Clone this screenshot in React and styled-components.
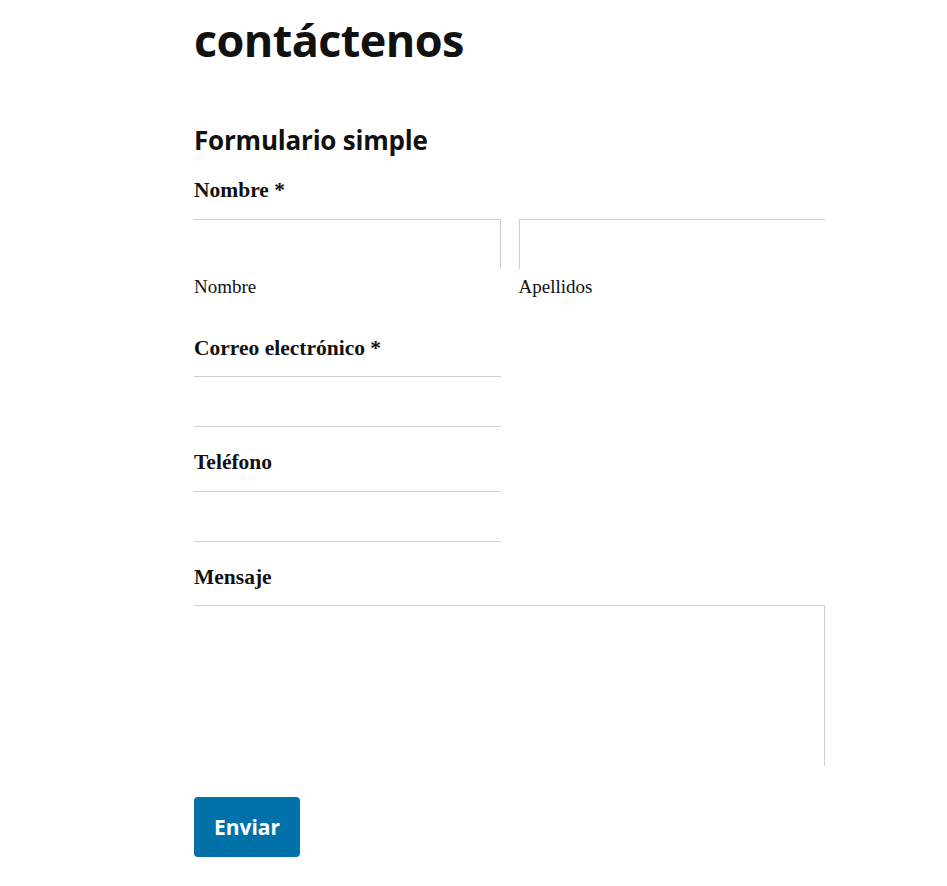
import React from 'react'
import styled, { createGlobalStyle } from 'styled-components'

const Global = createGlobalStyle`
  body {
    margin: 0;
    background: #fff;
    color: #111;
    font-family: "Liberation Serif", "Times New Roman", serif;
  }
`

const Page = styled.main`
  width: 631px;
  padding: 0 0 29px 194px;
`

const Title = styled.h1`
  font-family: "Open Sans", "Noto Sans", sans-serif;
  font-weight: 700;
  font-size: 45px;
  letter-spacing: -0.6px;
  line-height: 60px;
  margin: 10px 0 0;
`

const FormTitle = styled.h2`
  font-family: "Open Sans", "Noto Sans", sans-serif;
  font-weight: 700;
  font-size: 26px;
  letter-spacing: -0.2px;
  line-height: 34px;
  margin: 53px 0 0;
`

const Field = styled.div`
  margin-top: ${p => p.$gap || 0}px;
`

const Label = styled.label`
  display: block;
  font-weight: 700;
  font-size: 21.5px;
  line-height: 28px;
  margin-bottom: ${p => p.$space || 14}px;
`

const Req = styled.span`
  color: #111;
`

const NameRow = styled.div`
  display: grid;
  grid-template-columns: 1fr 1fr;
  column-gap: 18px;
`

const NamePart = styled.div`
  display: flex;
  flex-direction: column;
`

const Input = styled.input`
  display: block;
  box-sizing: border-box;
  width: ${p => (p.$half ? '307px' : '100%')};
  height: ${p => p.$h || 51}px;
  border: 0;
  border-top: 1px solid #cfcfcf;
  border-bottom: ${p => (p.$bottom ? '1px solid #cfcfcf' : '0')};
  border-left: ${p => (p.$left ? '1px solid #cfcfcf' : '0')};
  border-right: ${p => (p.$right ? '1px solid #cfcfcf' : '0')};
  background: transparent;
  outline: none;
  padding: 0 8px;
  font: inherit;
`

const SubLabel = styled.span`
  font-size: 19px;
  line-height: 24px;
  margin-top: 6px;
`

const TextArea = styled.textarea`
  display: block;
  box-sizing: border-box;
  width: 631px;
  height: 161px;
  border: 0;
  border-top: 1px solid #cfcfcf;
  border-right: 1px solid #cfcfcf;
  resize: none;
  outline: none;
  font: inherit;
`

const Submit = styled.button`
  margin-top: 31px;
  width: 106px;
  height: 60px;
  border: 0;
  border-radius: 4px;
  background: #0071a9;
  color: #fff;
  font-family: "Open Sans", "Noto Sans", sans-serif;
  font-weight: 700;
  font-size: 21px;
  cursor: pointer;
`

export default function App() {
  return (
    <>
      <Global />
      <Page>
        <Title>contáctenos</Title>
        <FormTitle>Formulario simple</FormTitle>
        <Field $gap={19}>
          <Label $space={15}>Nombre <Req>*</Req></Label>
          <NameRow>
            <NamePart>
              <Input $right $h={50} aria-label="Nombre" />
              <SubLabel>Nombre</SubLabel>
            </NamePart>
            <NamePart>
              <Input $left $h={50} aria-label="Apellidos" />
              <SubLabel>Apellidos</SubLabel>
            </NamePart>
          </NameRow>
        </Field>
        <Field $gap={35}>
          <Label>Correo electrónico <Req>*</Req></Label>
          <Input $half $bottom type="email" />
        </Field>
        <Field $gap={21}>
          <Label $space={15}>Teléfono</Label>
          <Input $half $bottom type="tel" />
        </Field>
        <Field $gap={21}>
          <Label>Mensaje</Label>
          <TextArea />
        </Field>
        <Submit type="submit">Enviar</Submit>
      </Page>
    </>
  )
}
